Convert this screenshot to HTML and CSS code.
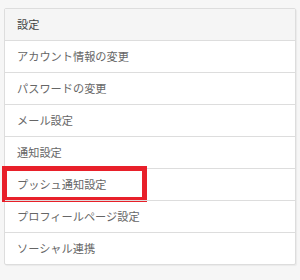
FILE: index.html
```html
<!DOCTYPE html>
<html lang="ja">

<head>
    <meta charset="UTF-8">
    <meta name="viewport" content="width=device-width, initial-scale=1.0">
    <link rel="stylesheet" href="styles.css">
    <title>設定</title>
</head>

<body>
    <div class="panel">
        <div class="panelhead">設定</div>
        <ul class="menulist">
            <li>アカウント情報の変更</li>
            <li>パスワードの変更</li>
            <li>メール設定</li>
            <li>通知設定</li>
            <li class="marked">プッシュ通知設定</li>
            <li>プロフィールページ設定</li>
            <li>ソーシャル連携</li>
        </ul>
    </div>
</body>

</html>
```

FILE: styles.css
```css
* {
    padding: 0;
    margin: 0;
    box-sizing: border-box;
}

body {
    background-color: #f6f6f6;
    padding: 8px 4px;
    font-family: "Noto Sans CJK JP", "Noto Sans", sans-serif;
    font-size: 11.2px;
    color: #666;
}

.panel {
    background-color: #fff;
    border: 1px solid #ddd;
    border-radius: 2px;
    box-shadow: 1px 1px 1px rgba(0, 0, 0, 0.05);
}

.panelhead {
    height: 31px;
    line-height: 31px;
    padding-left: 12px;
    background-color: #f5f5f5;
    color: #444;
}

.menulist {
    list-style: none;
}

.menulist>li {
    height: 32px;
    line-height: 31px;
    padding-left: 12px;
    border-top: 1px solid #ddd;
    position: relative;
}

/* red annotation frame round the push row */
.menulist>li.marked::after {
    content: "";
    box-sizing: border-box;
    position: absolute;
    left: -3px;
    top: -3px;
    width: 145px;
    height: 36px;
    border: 5px solid #e8202a;
}
```
